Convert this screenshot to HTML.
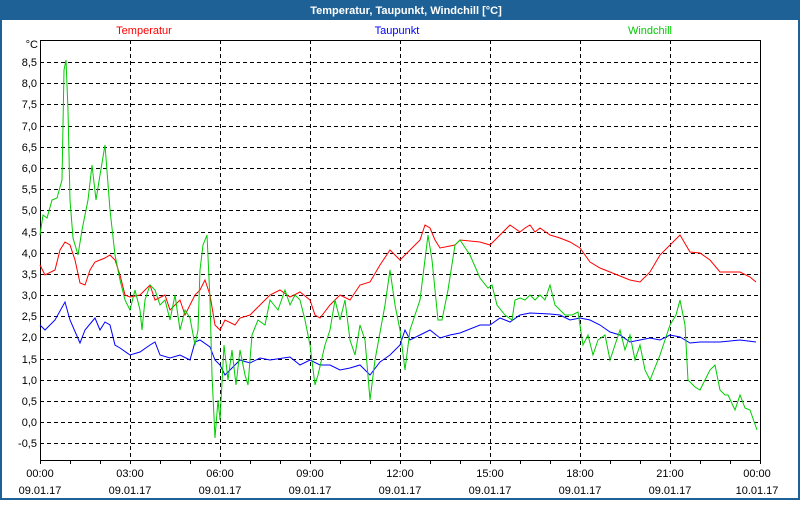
<!DOCTYPE html><html><head><style>
body{margin:0;width:800px;height:500px;overflow:hidden;background:#fff;font-family:"Liberation Sans",sans-serif}
</style></head><body>
<svg width="800" height="500" xmlns="http://www.w3.org/2000/svg" font-family="Liberation Sans, sans-serif" font-size="11">
<rect x="0" y="0" width="800" height="500" fill="#1e6196"/>
<rect x="2" y="20" width="796" height="478" fill="#fff"/>
<text x="406" y="14" fill="#fff" font-weight="bold" font-size="11" text-anchor="middle">Temperatur, Taupunkt, Windchill [°C]</text>
<text x="144" y="34" fill="#f00" text-anchor="middle">Temperatur</text>
<text x="397" y="34" fill="#00f" text-anchor="middle">Taupunkt</text>
<text x="650" y="34" fill="#0c0" text-anchor="middle">Windchill</text>
<g stroke="#000" stroke-dasharray="4,3" stroke-width="1">
<path d="M40 62.5H760M40 83.5H760M40 104.5H760M40 126.5H760M40 147.5H760M40 168.5H760M40 189.5H760M40 210.5H760M40 232.5H760M40 253.5H760M40 274.5H760M40 295.5H760M40 316.5H760M40 337.5H760M40 359.5H760M40 380.5H760M40 401.5H760M40 422.5H760M40 443.5H760"/>
<path d="M130.5 40V460M220.5 40V460M310.5 40V460M400.5 40V460M490.5 40V460M580.5 40V460M670.5 40V460"/>
</g>
<rect x="40.5" y="40.5" width="720" height="420" fill="none" stroke="#000"/>
<path stroke="#000" d="M70.5 460V464M100.5 460V464M130.5 460V464M160.5 460V464M190.5 460V464M220.5 460V464M250.5 460V464M280.5 460V464M310.5 460V464M340.5 460V464M370.5 460V464M400.5 460V464M430.5 460V464M460.5 460V464M490.5 460V464M520.5 460V464M550.5 460V464M580.5 460V464M610.5 460V464M640.5 460V464M670.5 460V464M700.5 460V464M730.5 460V464M40.5 460V464M760.5 460V464"/>
<g text-anchor="end" fill="#000">
<text x="38" y="48">°C</text>
<text x="37" y="66">8,5</text><text x="37" y="87">8,0</text><text x="37" y="108">7,5</text><text x="37" y="130">7,0</text><text x="37" y="151">6,5</text><text x="37" y="172">6,0</text><text x="37" y="193">5,5</text><text x="37" y="214">5,0</text><text x="37" y="236">4,5</text><text x="37" y="257">4,0</text><text x="37" y="278">3,5</text><text x="37" y="299">3,0</text><text x="37" y="320">2,5</text><text x="37" y="341">2,0</text><text x="37" y="363">1,5</text><text x="37" y="384">1,0</text><text x="37" y="405">0,5</text><text x="37" y="426">0,0</text><text x="37" y="447">-0,5</text>
</g>
<g text-anchor="middle" fill="#000">
<text x="40" y="477">00:00</text><text x="40" y="494">09.01.17</text>
<text x="130" y="477">03:00</text><text x="130" y="494">09.01.17</text>
<text x="220" y="477">06:00</text><text x="220" y="494">09.01.17</text>
<text x="310" y="477">09:00</text><text x="310" y="494">09.01.17</text>
<text x="400" y="477">12:00</text><text x="400" y="494">09.01.17</text>
<text x="490" y="477">15:00</text><text x="490" y="494">09.01.17</text>
<text x="580" y="477">18:00</text><text x="580" y="494">09.01.17</text>
<text x="670" y="477">21:00</text><text x="670" y="494">09.01.17</text>
<text x="757" y="477">00:00</text><text x="757" y="494">10.01.17</text>
</g>
<polyline fill="none" stroke="#f00" points="40,265 45,275 55,270 60,250 65,242 70,245 75,260 80,283 85,285 90,270 95,262 105,258 110,255 115,260 120,275 125,295 130,297 140,295 150,285 155,300 165,295 170,310 180,300 185,315 195,295 200,290 205,280 210,295 215,325 220,330 225,320 235,325 240,318 250,315 260,305 270,295 280,290 290,297 300,292 310,300 315,315 320,318 330,305 340,295 350,300 360,285 370,282 380,265 390,250 400,260 410,250 420,240 425,225 430,228 435,240 440,248 455,245 460,240 480,242 490,245 500,235 510,225 520,232 525,228 530,225 535,232 540,228 550,235 560,238 570,242 580,248 590,262 600,268 610,272 630,280 640,282 650,272 660,255 670,245 680,235 690,252 700,253 710,260 720,272 730,272 740,272 750,277 756,282"/>
<polyline fill="none" stroke="#00f" points="40,325 45,330 55,320 65,302 70,320 80,343 85,330 95,318 100,330 105,322 110,325 115,345 120,348 130,355 140,352 150,345 155,342 160,355 170,358 180,355 190,360 195,342 200,340 210,347 215,360 220,365 225,375 230,370 240,360 250,363 260,358 270,360 290,357 300,365 310,360 320,365 330,365 340,370 350,368 360,365 370,375 380,362 390,355 400,345 405,330 410,340 420,335 430,330 440,338 450,335 460,333 480,325 490,325 500,318 510,322 520,315 530,313 550,314 560,315 570,320 580,318 590,320 600,325 610,332 620,335 630,342 640,340 650,338 660,340 670,335 680,337 690,343 700,342 720,342 740,340 756,342"/>
<polyline fill="none" stroke="#0c0" points="40,235 43,215 47,218 52,200 57,198 62,180 64,70 66,60 68,110 70,200 73,238 78,255 82,230 88,200 92,165 96,200 100,175 105,145 110,210 115,255 120,280 125,300 130,310 135,290 140,310 142,330 145,300 150,285 155,290 160,305 165,300 170,320 175,295 180,330 185,310 190,318 195,345 198,330 200,270 203,245 207,235 210,300 212,375 215,438 218,400 220,420 224,345 228,380 232,350 236,385 240,350 245,375 248,385 252,335 258,320 265,325 270,300 278,310 285,290 290,305 295,295 300,300 305,320 310,345 315,385 318,375 325,345 330,330 335,300 340,320 345,300 350,340 355,355 360,325 365,340 370,400 375,360 385,305 390,270 395,305 400,330 405,370 410,330 420,300 428,235 432,260 438,320 442,320 448,290 455,245 460,240 470,255 480,278 488,288 492,285 497,305 505,315 512,320 515,300 520,298 525,300 530,295 535,300 540,295 545,300 550,285 555,305 565,315 572,315 578,312 583,345 588,335 593,355 598,340 605,335 610,360 615,345 620,330 625,350 630,335 635,360 640,345 645,370 650,380 660,355 665,340 670,325 676,315 680,300 685,325 688,380 695,387 700,390 705,380 710,370 715,365 720,390 725,395 728,395 735,410 740,395 745,408 750,410 757,430"/>
</svg>
</body></html>
